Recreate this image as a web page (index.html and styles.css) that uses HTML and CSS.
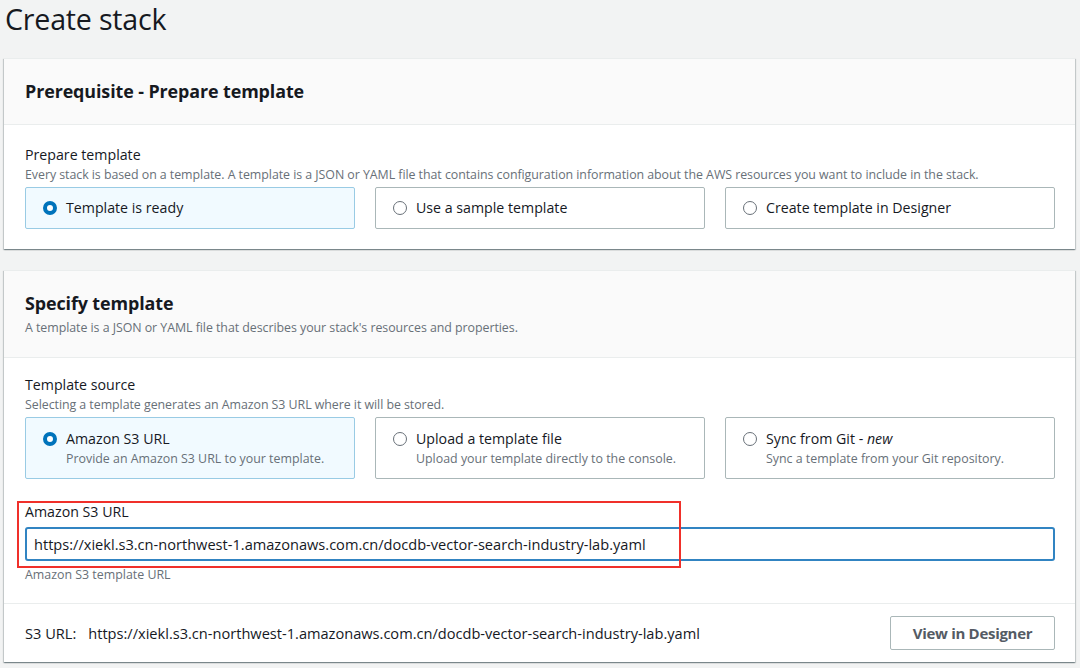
FILE: index.html
```html
<!DOCTYPE html>
<html>
<head>
<meta charset="utf-8">
<link rel="stylesheet" href="styles.css">
</head>
<body>
<div class="page">
  <h1 class="title">Create stack</h1>

  <section class="panel">
    <div class="panel-head">
      <h2>Prerequisite - Prepare template</h2>
    </div>
    <div class="panel-body prep">
      <div class="label">Prepare template</div>
      <div class="desc">Every stack is based on a template. A template is a JSON or YAML file that contains configuration information about the AWS resources you want to include in the stack.</div>
      <div class="tiles">
        <div class="tile selected short"><span class="radio on"></span><span class="tile-title">Template is ready</span></div>
        <div class="tile short"><span class="radio"></span><span class="tile-title">Use a sample template</span></div>
        <div class="tile short"><span class="radio"></span><span class="tile-title">Create template in Designer</span></div>
      </div>
    </div>
  </section>

  <section class="panel second">
    <div class="panel-head tall">
      <h2>Specify template</h2>
      <div class="desc head-desc">A template is a JSON or YAML file that describes your stack's resources and properties.</div>
    </div>
    <div class="panel-body src">
      <div class="label">Template source</div>
      <div class="desc">Selecting a template generates an Amazon S3 URL where it will be stored.</div>
      <div class="tiles">
        <div class="tile selected"><span class="radio on"></span><div class="tile-text"><div class="tile-title">Amazon S3 URL</div><div class="tile-sub">Provide an Amazon S3 URL to your template.</div></div></div>
        <div class="tile"><span class="radio"></span><div class="tile-text"><div class="tile-title">Upload a template file</div><div class="tile-sub">Upload your template directly to the console.</div></div></div>
        <div class="tile"><span class="radio"></span><div class="tile-text"><div class="tile-title">Sync from Git - <em>new</em></div><div class="tile-sub">Sync a template from your Git repository.</div></div></div>
      </div>
      <div class="field">
        <div class="label field-label">Amazon S3 URL</div>
        <div class="input">https://xiekl.s3.cn-northwest-1.amazonaws.com.cn/docdb-vector-search-industry-lab.yaml</div>
        <div class="hint">Amazon S3 template URL</div>
        <div class="highlight"></div>
      </div>
    </div>
    <div class="panel-foot">
      <div class="s3url"><span class="s3key">S3 URL:</span><span>https://xiekl.s3.cn-northwest-1.amazonaws.com.cn/docdb-vector-search-industry-lab.yaml</span></div>
      <button class="btn">View in Designer</button>
    </div>
  </section>
</div>
</body>
</html>
```

FILE: styles.css
```css
html, body {
  margin: 0;
  padding: 0;
  background: #f2f3f3;
  font-family: "Open Sans", "Noto Sans", Arial, sans-serif;
  color: #16191f;
  width: 1080px;
  height: 668px;
  overflow: hidden;
}
.page {
  padding: 0 5px 0 4px;
}
.title {
  margin: 0;
  padding-left: 1px;
  font-size: 28.6px;
  font-weight: 400;
  line-height: 38px;
  letter-spacing: -0.2px;
  color: #16191f;
}
.panel {
  margin-top: 20px;
  background: #fff;
  box-shadow: 0 1px 1px 0 rgba(0,28,36,0.3), 1px 1px 1px 0 rgba(0,28,36,0.15), -1px 1px 1px 0 rgba(0,28,36,0.15);
  border-top: 1px solid #eaeded;
}
.panel.second {
  margin-top: 21px;
}
.panel-head {
  background: #fafafa;
  border-bottom: 1px solid #eaeded;
  padding: 20px 21px 21px;
  height: 24px;
}
.panel-head.tall {
  height: auto;
  padding-bottom: 21px;
}
.panel-head h2 {
  margin: 0;
  font-size: 17.9px;
  line-height: 24px;
  font-weight: 700;
  letter-spacing: -0.1px;
}
.panel-head .head-desc {
  margin-top: 5px;
}
.panel-body {
  padding: 20px 20px 20px 21px;
}
.panel-body.src {
  padding-top: 17px;
  padding-bottom: 20px;
}
.label {
  font-size: 14.2px;
  line-height: 20px;
  color: #16191f;
}
.desc {
  font-size: 12.4px;
  line-height: 16px;
  margin-top: 2px;
  color: #687078;
  letter-spacing: -0.05px;
}
.tiles {
  display: grid;
  grid-template-columns: 330px 330px 330px;
  column-gap: 20px;
  margin-top: 4px;
}
.tile {
  border: 1px solid #aab7b8;
  border-radius: 2px;
  height: 62px;
  box-sizing: border-box;
  display: flex;
  align-items: flex-start;
  padding: 11px 17px;
  background: #fff;
}
.tile.short {
  height: 42px;
  align-items: center;
  padding-top: 0;
  padding-bottom: 0;
}
.tile.selected {
  background: #f1faff;
  border-color: #99cbe4;
}
.radio {
  flex: none;
  width: 14px;
  height: 14px;
  border-radius: 50%;
  border: 1px solid #687078;
  box-sizing: border-box;
  margin-right: 9px;
  background: #fff;
}
.tile:not(.short) .radio {
  margin-top: 3px;
}
.radio.on {
  border: 4px solid #0073bb;
}
.tile-title {
  font-size: 14.2px;
  line-height: 20px;
  color: #16191f;
}
.tile-sub {
  font-size: 12.4px;
  line-height: 19px;
  color: #687078;
}
.field {
  position: relative;
  margin-top: 23px;
}
.field-label {
  line-height: 20px;
}
.input {
  margin-top: 5px;
  height: 34px;
  box-sizing: border-box;
  border: 2px solid #3184c2;
  border-radius: 3px;
  padding: 0 7px;
  font-size: 14.6px;
  line-height: 30px;
  color: #16191f;
  letter-spacing: 0;
  white-space: nowrap;
}
.hint {
  font-size: 12.4px;
  line-height: 16px;
  margin-top: 6px;
  color: #687078;
}
.highlight {
  position: absolute;
  left: -8px;
  top: -1px;
  width: 664px;
  height: 67px;
  border: 2px solid #f0302a;
  box-sizing: border-box;
}
.panel-foot {
  border-top: 1px solid #eaeded;
  padding: 12px 20px 12px 21px;
  display: flex;
  align-items: center;
  justify-content: space-between;
  height: 59px;
  box-sizing: border-box;
}
.s3url {
  font-size: 14.6px;
  color: #16191f;
  white-space: nowrap;
}
.s3key {
  margin-right: 12px;
}
.btn {
  width: 165px;
  height: 34px;
  background: #fff;
  border: 1px solid #aab7b8;
  border-radius: 2px;
  font-family: "Open Sans", "Noto Sans", Arial, sans-serif;
  font-size: 15px;
  font-weight: 700;
  color: #545b64;
  letter-spacing: -0.3px;
  padding: 0;
}
```
